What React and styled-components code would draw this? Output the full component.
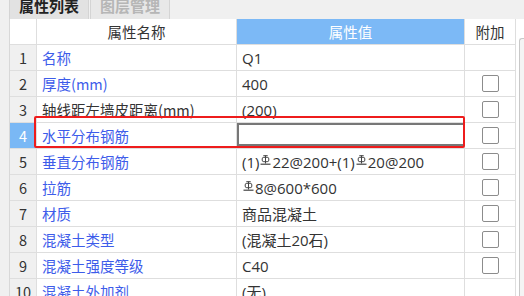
import React from 'react'
import styled, { createGlobalStyle } from 'styled-components'

const Global = createGlobalStyle`
    html, body { margin: 0; padding: 0; }
    body {
        width: 524px;
        height: 296px;
        overflow: hidden;
        background: #f0f0f0;
        font-family: "Noto Sans CJK SC", "Noto Sans", sans-serif;
    }
`

const Page = styled.div`
    display: flex;
    flex-direction: column;
    height: 296px;
    overflow: hidden;
`

const TabBar = styled.div`
    display: flex;
    flex-shrink: 0;
    height: 19px;
    padding-left: 9px;
    background: #f0f0f0;
    overflow: hidden;
`

const Tab = styled.div`
    width: 80px;
    height: 19px;
    margin-right: 1px;
    display: flex;
    align-items: flex-end;
    justify-content: center;
    box-sizing: border-box;
    border: 1px solid #d4d4d4;
    border-top: none;
    border-bottom: none;
    background: ${p => p.active ? '#e2e2e2' : '#e8e8e8'};
    color: ${p => p.active ? '#222' : '#b6b6b6'};
    font-size: 15px;
    font-weight: 700;
    line-height: 15px;
    padding-bottom: 6px;
`

const Body = styled.div`
    display: flex;
    flex-shrink: 0;
    padding-left: 9px;
`

const Table = styled.div`
    display: grid;
    grid-template-columns: 27px 200px 228px 51px;
    grid-auto-rows: 26px;
    width: 506px;
    background: #fff;
    border-left: 1px solid #d8d8d8;
    box-sizing: border-box;
`

const Row = styled.div`
    display: contents;
`

const Cell = styled.div`
    position: relative;
    display: flex;
    align-items: center;
    box-sizing: border-box;
    border-right: 1px solid #dedede;
    border-bottom: 1px solid #dedede;
    padding-left: 5px;
    font-size: 14.5px;
    color: #333;
    white-space: nowrap;
`

const NumCell = styled(Cell)`
    justify-content: center;
    padding-left: 0;
    background: ${p => p.selected ? '#7ab8f5' : '#f0f0f0'};
    color: ${p => p.selected ? '#fff' : '#333'};
`

const HeadCell = styled(Cell)`
    justify-content: center;
    padding-left: 0;
    background: ${p => p.blue ? '#7cb9f6' : '#fff'};
    color: ${p => p.blue ? '#fff' : '#333'};
`

const NameCell = styled(Cell)`
    color: ${p => p.plain ? '#333' : '#3d5cea'};
`

const ValueCell = styled(Cell)`
    font-family: "Open Sans", "Noto Sans CJK SC", sans-serif;
    font-size: 15px;
`

const CheckCell = styled(Cell)`
    justify-content: center;
    padding-left: 0;
`

const Check = styled.div`
    width: 15px;
    height: 15px;
    border: 1.5px solid #8c8c8c;
    border-radius: 2px;
    background: #fff;
`

const EditBox = styled.div`
    position: absolute;
    left: 0;
    top: 0;
    right: -1px;
    bottom: 2px;
    border: 2px solid #777;
    border-right-width: 1px;
    background: #fff;
`

const Mark = styled.div`
    position: absolute;
    left: -3px;
    top: -7px;
    width: 431px;
    height: 32px;
    border: 2.5px solid #ee1c1c;
    border-radius: 2px;
    box-sizing: border-box;
    pointer-events: none;
    z-index: 2;
`

const Side = styled.div`
    flex: 1;
    background: #fff;
    border-left: 1px solid #dedede;
    display: flex;
    padding-top: 19px;
    padding-left: 3px;
`

const Thumb = styled.div`
    width: 6px;
    height: 260px;
    border: 1px solid #c8c8c8;
    border-right: none;
    border-radius: 3px 0 0 0;
    background: #f4f4f4;
`

const SteelSvg = styled.svg`
    width: 11px;
    height: 10px;
    margin: 0 1px 0 1px;
    position: relative;
    top: -2px;
`

const Steel = () => (
    <SteelSvg viewBox="0 0 11 10">
        <path d="M5.5 0.5V8.5" stroke="#444" strokeWidth="1" fill="none" />
        <rect x="2.2" y="2.3" width="6.6" height="4.4" rx="1.6" stroke="#444" strokeWidth="1" fill="none" />
        <path d="M3.3 0.7H7.7" stroke="#444" strokeWidth="1" />
        <path d="M0.5 9.2H10.5" stroke="#444" strokeWidth="1.2" />
    </SteelSvg>
)

const rows = [
    { name: '名称', value: 'Q1', check: false },
    { name: '厚度(mm)', value: '400', check: true },
    { name: '轴线距左墙皮距离(mm)', value: '(200)', check: true, plain: true },
    { name: '水平分布钢筋', value: '', check: true, selected: true },
    { name: '垂直分布钢筋', value: <>(1)<Steel />22@200+(1)<Steel />20@200</>, check: true },
    { name: '拉筋', value: <><Steel />8@600*600</>, check: true },
    { name: '材质', value: '商品混凝土', check: true },
    { name: '混凝土类型', value: '(混凝土20石)', check: true },
    { name: '混凝土强度等级', value: 'C40', check: true },
    { name: '混凝土外加剂', value: '(无)', check: false },
]

export default function App() {
    return (
        <Page>
            <Global />
            <TabBar>
                <Tab active>属性列表</Tab>
                <Tab>图层管理</Tab>
            </TabBar>
            <Body>
                <Table>
                    <Row>
                        <HeadCell />
                        <HeadCell>属性名称</HeadCell>
                        <HeadCell blue>属性值</HeadCell>
                        <HeadCell>附加</HeadCell>
                    </Row>
                    {rows.map((r, i) => (
                        <Row key={i}>
                            <NumCell selected={r.selected}>{i + 1}</NumCell>
                            <NameCell plain={r.plain}>
                                {r.name}
                                {r.selected && <Mark />}
                            </NameCell>
                            <ValueCell>
                                {r.selected ? <EditBox /> : r.value}
                            </ValueCell>
                            <CheckCell>{r.check && <Check />}</CheckCell>
                        </Row>
                    ))}
                </Table>
                <Side>
                    <Thumb />
                </Side>
            </Body>
        </Page>
    )
}
